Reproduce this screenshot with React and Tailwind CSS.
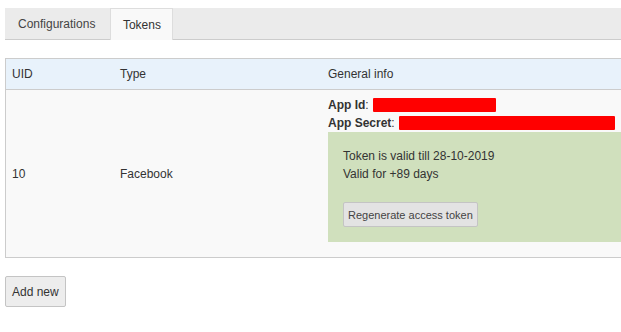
export default function App() {
  return (
    <div className="h-[332px] w-[621px] overflow-hidden bg-white font-['Liberation_Sans',Arial,sans-serif] text-[12px] text-[#333]">
      <div className="w-[680px] pl-[5px] pt-[8px]">
        {/* tabs */}
        <div className="flex h-[32px] border-b border-[#ccc] bg-[#ebebeb]">
          <div className="flex h-[31px] items-center pl-[13px] pr-[15px] text-[#444]">Configurations</div>
          <div className="-mb-px flex h-[32px] w-[63px] items-center justify-center border-x border-t border-[#ddd] bg-[#f9f9f9] text-[#333]">
            Tokens
          </div>
        </div>

        {/* table */}
        <div className="mt-[18px] border border-[#ccc]">
          <div className="flex h-[31px] items-center border-b border-[#ccc] bg-[#e8f2fb]">
            <div className="w-[107px] pl-[6px]">UID</div>
            <div className="w-[208px] pl-[7px]">Type</div>
            <div className="flex-1 pl-[7px]">General info</div>
          </div>
          <div className="flex h-[167px] bg-[#f9f9f9]">
            <div className="flex w-[107px] items-center pl-[6px]">10</div>
            <div className="flex w-[208px] items-center pl-[7px]">Facebook</div>
            <div className="flex-1 pl-[7px] pt-[6px]">
              <div className="flex h-[18px] items-center">
                <span className="font-bold">App Id</span>:
                <span className="ml-[4px] h-[14px] w-[123px] rounded-[1px] bg-[#ff0000]" />
              </div>
              <div className="flex h-[18px] items-center">
                <span className="font-bold">App Secret</span>:
                <span className="ml-[4px] h-[14px] w-[216px] rounded-[1px] bg-[#ff0000]" />
              </div>
              <div className="h-[110px] bg-[#d0e0bd] px-[15px] pt-[15px] leading-[18px]">
                <div>Token is valid till 28-10-2019</div>
                <div>Valid for +89 days</div>
                <button className="mt-[19px] h-[25px] rounded-[2px] border border-[#c4c4c4] bg-[#e3e3e3] px-[4px] text-[11px] text-[#444]">
                  Regenerate access token
                </button>
              </div>
            </div>
          </div>
        </div>

        <button className="mt-[18px] h-[31px] rounded-[2px] border border-[#c4c4c4] bg-[#ededed] px-[6px] text-[12px] text-[#333]">
          Add new
        </button>
      </div>
    </div>
  )
}
